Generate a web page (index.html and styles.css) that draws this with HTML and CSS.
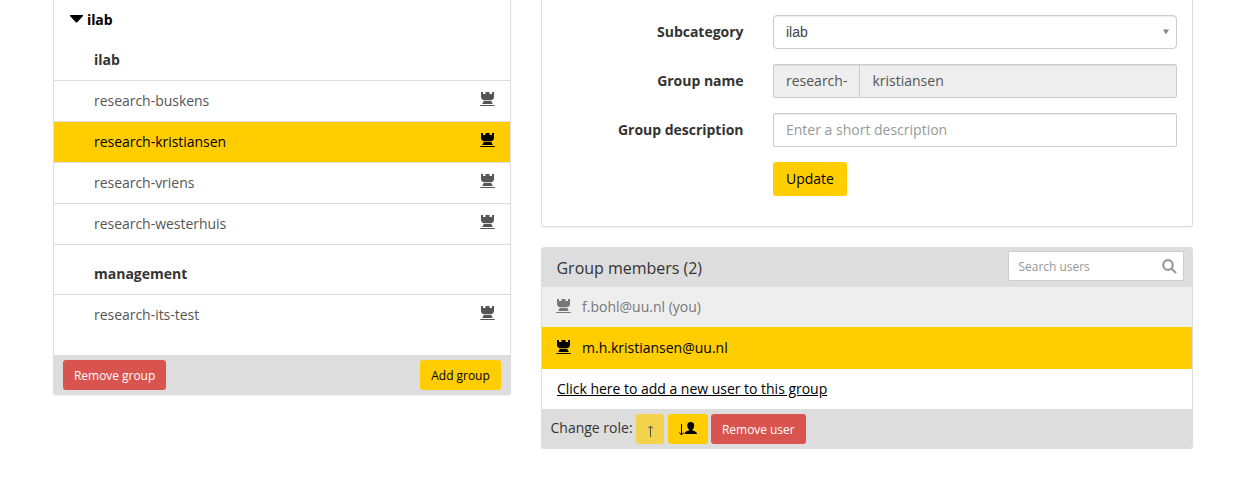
FILE: index.html
```html
<!DOCTYPE html>
<html lang="en">
<head>
<meta charset="utf-8">
<title>Group manager</title>
<link rel="stylesheet" href="styles.css">
</head>
<body>
<svg width="0" height="0" class="defs">
  <symbol id="tower" viewBox="0 0 15 15"><path d="M1 0H3V2H5.500V0H9.500V2H12V0H14V5.500Q13.500 7.500 11.500 8.200H3.500Q1.500 7.500 1 5.500ZM3.500 9H11.500V10L12.500 11V12H2.500V11L3.500 10ZM.3 13H14.700V14H.3Z"/></symbol>
</svg>
<main class="layout">
  <section class="panel groups">
    <div class="category"><svg class="caret" width="13" height="8" viewBox="0 0 13 8"><path d="M0 0H13V1L7 7.500H6L0 1Z"/></svg>ilab</div>
    <h4 class="subcategory">ilab</h4>
    <ul class="list">
      <li>research-buskens<svg class="tower"><use href="#tower"/></svg></li>
      <li class="active">research-kristiansen<svg class="tower"><use href="#tower"/></svg></li>
      <li>research-vriens<svg class="tower"><use href="#tower"/></svg></li>
      <li>research-westerhuis<svg class="tower"><use href="#tower"/></svg></li>
    </ul>
    <h4 class="subcategory second">management</h4>
    <ul class="list last">
      <li>research-its-test<svg class="tower"><use href="#tower"/></svg></li>
    </ul>
    <footer class="groups-footer"><button class="btn small danger remove-group">Remove group</button><button class="btn small add-group">Add group</button></footer>
  </section>
  <div class="details">
    <section class="panel properties">
      <div class="field"><span class="label">Subcategory</span><div class="control select"><span>ilab</span><svg width="6" height="6" viewBox="0 0 6 6"><path d="M0 .5H6L3 5.500Z"/></svg></div></div>
      <div class="field"><span class="label">Group name</span><div class="control group-name"><span class="prefix">research-</span><span class="value">kristiansen</span></div></div>
      <div class="field"><span class="label">Group description</span><div class="control placeholder">Enter a short description</div></div>
      <button class="btn update">Update</button>
    </section>
    <section class="panel members">
      <header class="members-header"><span>Group members (2)</span><div class="search"><span>Search users</span><svg width="15" height="15" viewBox="0 0 15 15"><circle cx="6" cy="6" r="4.800"/><path d="M9.500 9.500L14 14"/></svg></div></header>
      <div class="member self"><svg class="tower"><use href="#tower"/></svg>f.bohl@uu.nl (you)</div>
      <div class="member active"><svg class="tower"><use href="#tower"/></svg>m.h.kristiansen@uu.nl</div>
      <div class="member add"><a>Click here to add a new user to this group</a></div>
      <footer class="members-footer"><span>Change role:</span>
        <button class="btn small up"><svg width="7" height="12" viewBox="0 0 7 12"><path class="arrow" d="M3.500 12V1M1 3.500L3.500 1L6 3.500"/></svg></button>
        <button class="btn small down"><svg width="18" height="14" viewBox="0 0 18 14"><path class="arrow" d="M2.500 2V13M.5 10.500L2.500 13L4.500 10.500"/><path d="M8.200 3.500Q8.200 0 11.700 0Q15.200 0 15.200 3.500Q15.200 6 13.500 7.500V8.500Q18 9.500 18 12H5.500Q5.500 9.500 10 8.500V7.500Q8.200 6 8.200 3.500Z"/></svg></button>
        <button class="btn small danger">Remove user</button>
      </footer>
    </section>
  </div>
</main>
</body>
</html>
```
FILE: styles.css
```css
* { box-sizing: border-box; }
body { margin: 0; background: #fff; color: #333; font: 14px/20px "Open Sans", sans-serif; overflow: hidden; }
.defs { display: none; }
.layout { display: flex; align-items: flex-start; gap: 30px; padding-left: 53px; }
.panel { border: 1px solid #ddd; border-radius: 3px; background: #fff; box-shadow: 0 1px 1px rgba(0,0,0,.05); }
.groups { width: 458px; border-top: 0; border-top-left-radius: 0; border-top-right-radius: 0; }
.category { display: flex; align-items: center; height: 40px; padding-left: 16px; gap: 4px; font-weight: bold; color: #000; letter-spacing: -.1px; }
.caret { margin-top: -3px; }
.subcategory { margin: 0; padding: 10px 40px; height: 40px; font-size: 14px; font-weight: bold; }
.second { height: 49px; padding-top: 19px; }
.list { margin: 0; padding: 0; list-style: none; border-bottom: 1px solid #ddd; }
.list li { display: flex; justify-content: space-between; height: 41px; padding: 10px 15px 0 40px; border-top: 1px solid #ddd; color: #555; letter-spacing: -.03px; }
.list .active { background: #ffcd00; color: #000; }
.list.last { height: 61px; border-bottom: 0; }
.tower { width: 15px; height: 15px; fill: currentColor; flex: none; }
.list .tower { margin-top: 1px; }
.groups-footer { display: flex; justify-content: space-between; height: 39px; padding: 5px 9px; background: #ddd; }
.btn { height: 34px; border: 0; border-radius: 3px; padding: 0 13px; background: #ffcd00; color: #000; font: inherit; white-space: nowrap; }
.small { height: 30px; padding: 2px 11px 0; font-size: 12px; letter-spacing: -.04px; }
.danger { background: #d9534f; color: #fff; }
.remove-group { width: 103px; }
.add-group { width: 81px; }
.details { width: 652px; display: grid; gap: 20px; }
.properties { height: 227px; padding: 15px 15px 0; border-top: 0; border-top-left-radius: 0; border-top-right-radius: 0; }
.field { display: grid; grid-template-columns: 186.500px 404px; gap: 29.500px; margin-bottom: 15px; }
.label { text-align: right; font-weight: bold; padding-top: 7px; letter-spacing: -.02px; }
.control { display: flex; align-items: center; height: 34px; padding: 0 12px; border: 1px solid #ccc; border-radius: 2px; box-shadow: inset 0 1px 1px rgba(0,0,0,.075); color: #555; }
.select { border-radius: 4px; justify-content: space-between; padding-right: 7px; color: #444; font-family: "Liberation Sans", sans-serif; }
.select svg { fill: #888; }
.group-name { padding: 0; background: #eee; }
.prefix { height: 32px; padding: 6px 12px; border-right: 1px solid #ccc; }
.value { padding-left: 12px; }
.placeholder { color: #999; }
.update { margin-left: 216px; }
.members { height: 202px; overflow: hidden; }
.members-header { display: flex; align-items: flex-start; justify-content: space-between; height: 39px; padding: 3px 8px 0 14.500px; background: #ddd; font-size: 16px; letter-spacing: -.02px; }
.members-header > span { padding-top: 7px; }
.search { display: flex; align-items: center; justify-content: space-between; width: 176px; height: 30px; padding: 0 6px 0 9.500px; border: 1px solid #ccc; border-radius: 2px; background: #fff; color: #999; font-size: 12px; }
.search span { padding-top: 2px; }
.search svg { fill: none; stroke: #999; stroke-width: 2.2; }
.member { display: flex; height: 40px; padding: 10px 14px; gap: 11px; }
.member .tower { margin-top: 2px; }
.self { background: #eee; color: #777; }
.member.active { height: 42px; padding-top: 11px; background: #ffcd00; color: #000; }
.member.add { padding-left: 15px; letter-spacing: -.02px; }
.add a { color: #000; text-decoration: underline; }
.members-footer { display: flex; height: 39px; padding: 5px 8.500px; background: #ddd; }
.members-footer span { width: 82px; margin-right: 3.500px; padding-top: 4px; white-space: nowrap; }
.members-footer svg { display: block; margin: auto; }
.arrow { fill: none; stroke: currentColor; stroke-width: 1; }
.up { width: 28px; margin-right: 4px; padding: 3px 0 0; opacity: .65; }
.down { width: 40px; margin-right: 3px; padding: 0; }
```
